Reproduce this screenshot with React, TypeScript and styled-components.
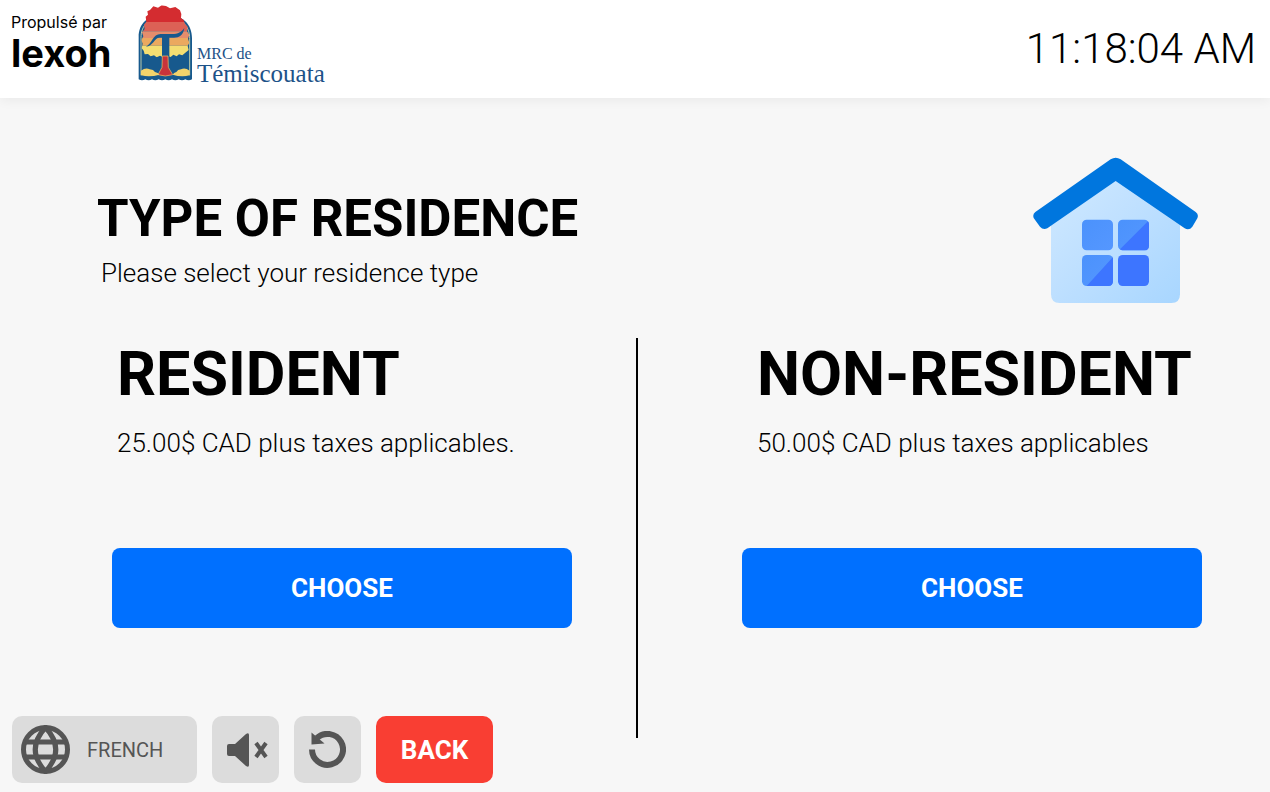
import React, { useId } from "react";
import styled, { createGlobalStyle } from "styled-components";

const GlobalStyle = createGlobalStyle`
  *, *::before, *::after { box-sizing: border-box; }
  body {
    margin: 0;
    background: #f7f7f7;
    color: #000;
    font-family: Roboto, "Liberation Sans", sans-serif;
  }
  h1, h2, p { margin: 0; }
  button { font-family: inherit; border: 0; cursor: pointer; }
`;

const Page = styled.div`
  min-height: 100vh;
  display: flex;
  flex-direction: column;
`;

const Header = styled.header`
  display: flex;
  align-items: flex-start;
  height: 98px;
  padding: 5px 14px 0 11px;
  background: #fff;
  box-shadow: 0 1px 12px rgba(0, 0, 0, 0.07);
`;

const Brand = styled.div`
  width: 127px;
  padding-top: 7px;
`;

const BrandCaption = styled.div`
  font: 400 16px/20px Inter, sans-serif;
`;

const BrandName = styled.div`
  font: 700 38px/42px Inter, sans-serif;
`;

const Region = styled.div`
  display: flex;
  align-items: flex-start;
  gap: 3px;
  color: #1d5288;
  font-family: "Liberation Serif", serif;
`;

const RegionText = styled.div`
  padding-top: 40px;
`;

const RegionKind = styled.div`
  font-size: 16px;
  line-height: 18px;
`;

const RegionName = styled.div`
  font-size: 25px;
  line-height: 22px;
`;

const Clock = styled.time`
  margin-left: auto;
  padding-top: 18px;
  font-size: 42px;
  line-height: 52px;
  font-weight: 300;
`;

const Intro = styled.section`
  display: flex;
  justify-content: space-between;
  align-items: flex-start;
  height: 240px;
  padding: 59px 72px 0 97px;
`;

const IntroText = styled.div`
  padding-top: 32px;
`;

const Title = styled.h1`
  font-size: 51px;
  line-height: 60px;
  font-weight: 700;
`;

const Lead = styled.p`
  padding: 9px 0 0 4px;
  font-size: 26px;
  line-height: 30px;
  font-weight: 300;
`;

const Options = styled.main`
  display: flex;
  min-height: 400px;
`;

const Option = styled.section<{ $divided?: boolean }>`
  flex: 1 1 0;
  display: flex;
  flex-direction: column;
  padding: ${(p) => (p.$divided ? "0 64px 0 112px" : "0 68px 0 104px")};
  border-right: ${(p) => (p.$divided ? "2px solid #000" : "0")};
`;

const OptionText = styled.div<{ $inset: number }>`
  padding: 0 0 0 ${(p) => p.$inset}px;
  height: 210px;
  white-space: nowrap;
`;

const OptionTitle = styled.h2`
  font-size: 61px;
  line-height: 72px;
  font-weight: 700;
`;

const Price = styled.p`
  padding: 18px 0 0;
  font-size: 26px;
  line-height: 30px;
  font-weight: 300;
`;

const ChooseButton = styled.button`
  height: 80px;
  border-radius: 8px;
  background: #0070ff;
  color: #fff;
  font-size: 26px;
  font-weight: 700;
`;

const Footer = styled.footer`
  display: flex;
  gap: 15px;
  margin-top: -22px;
  padding: 0 12px 9px;
`;

const ToolButton = styled.button<{ $wide?: boolean }>`
  display: flex;
  align-items: center;
  justify-content: ${(p) => (p.$wide ? "flex-start" : "center")};
  gap: 17px;
  width: ${(p) => (p.$wide ? 185 : 67)}px;
  height: 67px;
  padding: 0 0 0 ${(p) => (p.$wide ? 9 : 0)}px;
  border-radius: 10px;
  background: #dcdcdc;
  color: #555;
  font-size: 20px;
`;

const BackButton = styled.button`
  width: 117px;
  height: 67px;
  border-radius: 10px;
  background: #f93e33;
  color: #fff;
  font-size: 26px;
  font-weight: 700;
`;

function Crest() {
  const clip = useId();
  return (
    <svg width="56" height="76" viewBox="24 15 168 228" aria-hidden="true">
      <defs>
        <clipPath id={clip}>
          <path d="M60 30 70 19 84 23 95 16 108 18 120 25 136 21 150 31 154 42 153 54 161 60 165 72 173 80 171 94 178 104 174 116 178 128 173 138 176 150 166 158 157 166 147 163 140 169 130 164 122 171 112 168 100 172 90 167 80 172 72 166 62 169 54 162 44 163 41 152 35 145 38 131 34 120 40 109 36 97 44 87 42 74 49 65 47 50 54 44 52 34Z" />
        </clipPath>
      </defs>
      <path d="M26 238V111C26 70 53 44 106 44S186 72 186 115v123q-10 6-20 0-10 6-20 0-10 6-20 0-10 6-20 0-10 6-20 0-10 6-20 0-10 6-20 0-10 6-20 0Z" fill="#17598d" />
      <path d="M33 226V113C33 75 58 51 106 51S179 77 179 116v110" fill="none" stroke="#b9c9a8" strokeWidth="3" />
      <g clipPath={`url(#${clip})`}>
        <path d="M24 15h168v51H24z" fill="#d42c30" />
        <path d="M24 66h168v28H24z" fill="#dc6156" />
        <path d="M24 94h168v20H24z" fill="#e58d6c" />
        <path d="M24 114h168v23H24z" fill="#eba95f" />
        <path d="M24 137h168v38H24z" fill="#f4de72" />
      </g>
      <path d="M48 140c18-8 20-38 44-38h34c18 0 28-6 37-18-3 21-15 29-31 29h-14v62H96v-62h-8c-14 0-20 26-40 27Z" fill="#17598d" />
      <path d="M97 168h17l1 34 13 22q-22 8-44 0l12-22Z" fill="#c7333b" stroke="#f0c765" strokeWidth="2" />
      <path d="M33 212q14-10 26-4 12 1 16 8 10 2 13 8-28 8-55 2ZM179 212q-14-10-26-4-10 1-14 8-8 2-11 8 26 8 51 2Z" fill="#f2d36b" />
    </svg>
  );
}

function House() {
  const wall = useId();
  const light = useId();
  return (
    <svg width="165" height="146" viewBox="39 36 495 438" aria-hidden="true">
      <defs>
        <linearGradient id={wall} x1="0" y1="0" x2="1" y2="1">
          <stop offset="0" stopColor="#d0e9ff" />
          <stop offset="0.45" stopColor="#bfe0ff" />
          <stop offset="1" stopColor="#a8d6ff" />
        </linearGradient>
        <linearGradient id={light} x1="0" y1="0" x2="1" y2="1">
          <stop offset="0" stopColor="#4b92fc" />
          <stop offset="1" stopColor="#5597ff" />
        </linearGradient>
      </defs>
      <path d="M287 100 480 232V448q0 26-26 26H119q-26 0-26-26V232Z" fill={`url(#${wall})`} />
      <path d="M272 43q15-9 30 0L527 201q10 7 5 19l-15 25q-9 12-23 5L287 108 82 250q-13 6-22-5L41 219q-4-11 5-18Z" fill="#0076de" />
      <rect x="186" y="224" width="93" height="92" rx="14" fill={`url(#${light})`} />
      <rect x="294" y="224" width="93" height="92" rx="14" fill={`url(#${light})`} />
      <rect x="186" y="330" width="93" height="93" rx="14" fill={`url(#${light})`} />
      <rect x="294" y="330" width="93" height="93" rx="14" fill="#3d75ff" />
      <path d="M384 229q3 4 3 9v64q0 14-14 14h-65q-5 0-8-3ZM279 336v73q0 14-14 14h-65Z" fill="#3d75ff" />
    </svg>
  );
}

function Globe() {
  return (
    <svg width="49" height="49" viewBox="0 0 98 98" fill="none" stroke="currentColor" strokeWidth="10" aria-hidden="true">
      <circle cx="49" cy="49" r="44" />
      <path d="M49 5C22 34 22 64 49 93C76 64 76 34 49 5Z" />
      <path d="M9 34h80M9 64h80" />
    </svg>
  );
}

function Muted() {
  return (
    <svg width="45" height="34" viewBox="0 0 45 34" aria-hidden="true">
      <path d="M4 13q0-2 2-2h6L23 1q3-2 3 1v30q0 3-3 1L12 23H6q-2 0-2-2Z" fill="currentColor" />
      <path d="m33 10 10 14M43 10 33 24" stroke="currentColor" strokeWidth="4" />
    </svg>
  );
}

function Restart() {
  return (
    <svg width="37" height="37" viewBox="0 0 74 74" aria-hidden="true">
      <path d="M6 37A31 31 0 1 0 16 14" fill="none" stroke="currentColor" strokeWidth="12" />
      <path d="M5 3v24l26-2Z" fill="currentColor" />
    </svg>
  );
}

export default function App() {
  return (
    <Page>
      <GlobalStyle />
      <Header>
        <Brand>
          <BrandCaption>Propulsé par</BrandCaption>
          <BrandName>lexoh</BrandName>
        </Brand>
        <Region>
          <Crest />
          <RegionText>
            <RegionKind>MRC de</RegionKind>
            <RegionName>Témiscouata</RegionName>
          </RegionText>
        </Region>
        <Clock>11:18:04 AM</Clock>
      </Header>
      <Intro>
        <IntroText>
          <Title>TYPE OF RESIDENCE</Title>
          <Lead>Please select your residence type</Lead>
        </IntroText>
        <House />
      </Intro>
      <Options>
        <Option $divided>
          <OptionText $inset={5}>
            <OptionTitle>RESIDENT</OptionTitle>
            <Price>25.00$ CAD plus taxes applicables.</Price>
          </OptionText>
          <ChooseButton type="button">CHOOSE</ChooseButton>
        </Option>
        <Option>
          <OptionText $inset={15}>
            <OptionTitle>NON-RESIDENT</OptionTitle>
            <Price>50.00$ CAD plus taxes applicables</Price>
          </OptionText>
          <ChooseButton type="button">CHOOSE</ChooseButton>
        </Option>
      </Options>
      <Footer>
        <ToolButton type="button" $wide>
          <Globe />
          FRENCH
        </ToolButton>
        <ToolButton type="button" aria-label="Mute">
          <Muted />
        </ToolButton>
        <ToolButton type="button" aria-label="Restart">
          <Restart />
        </ToolButton>
        <BackButton type="button">BACK</BackButton>
      </Footer>
    </Page>
  );
}
